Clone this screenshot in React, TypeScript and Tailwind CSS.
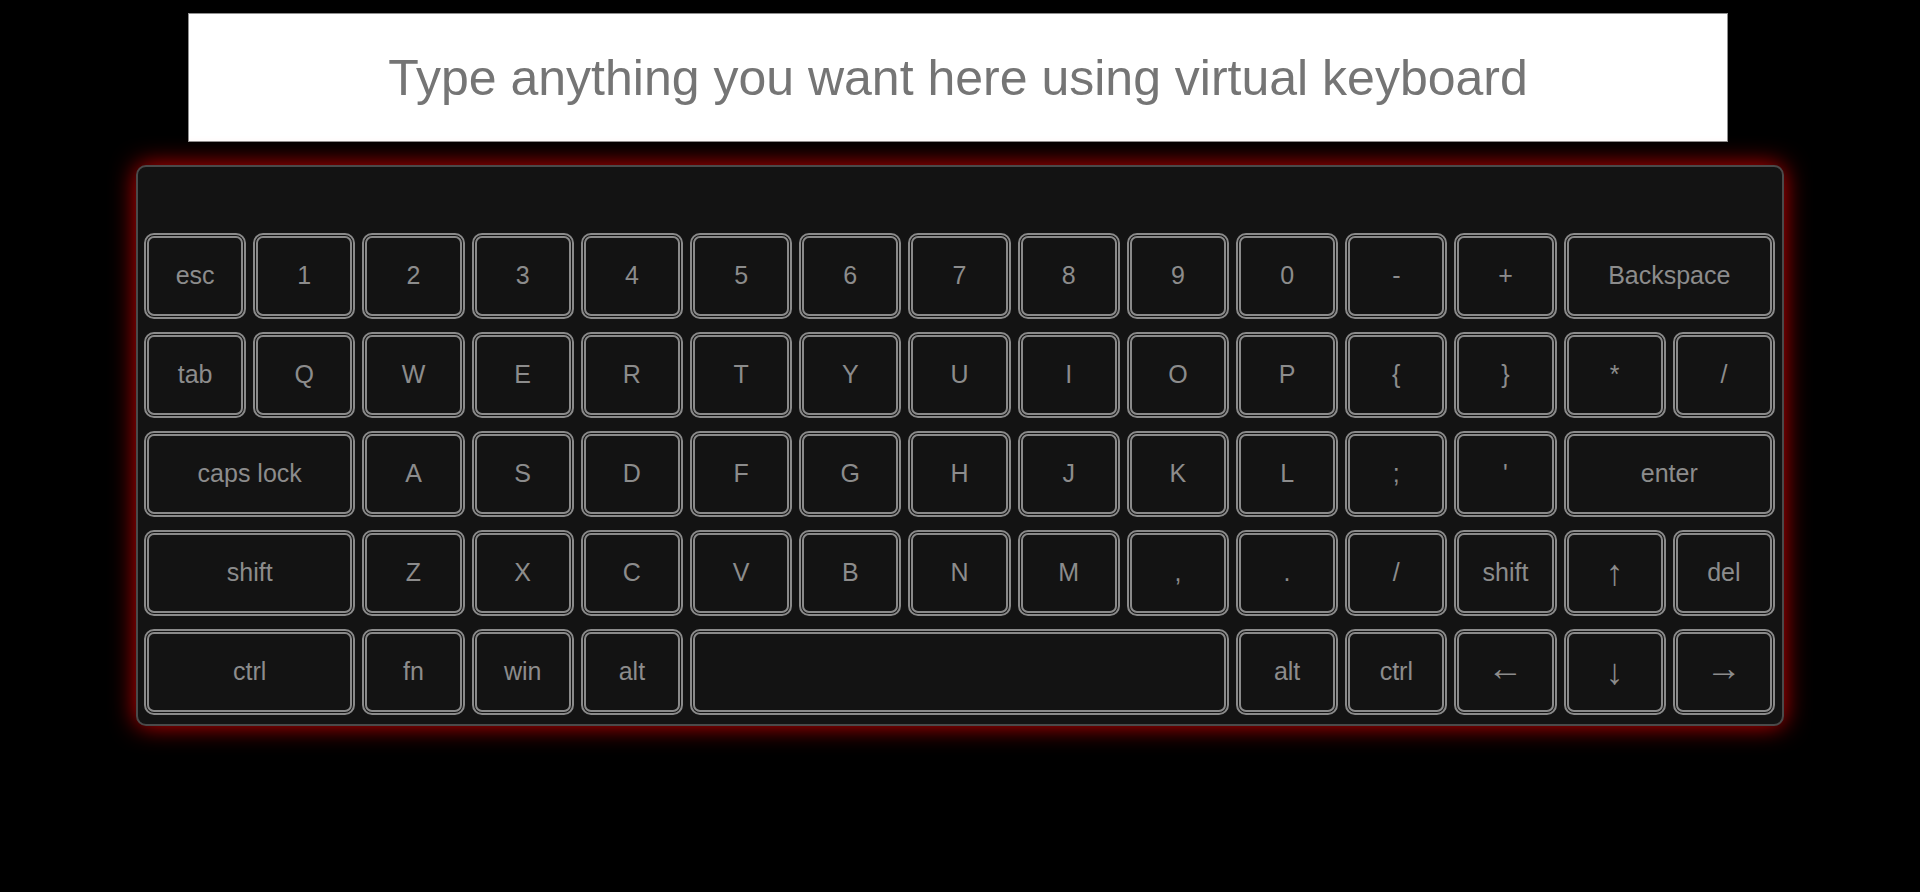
import React from "react";

type K = { l: string; s?: number; a?: number };

const rows: K[][] = [
  [
    { l: "esc" },
    { l: "1" },
    { l: "2" },
    { l: "3" },
    { l: "4" },
    { l: "5" },
    { l: "6" },
    { l: "7" },
    { l: "8" },
    { l: "9" },
    { l: "0" },
    { l: "-" },
    { l: "+" },
    { l: "Backspace", s: 2 },
  ],
  [
    { l: "tab" },
    { l: "Q" },
    { l: "W" },
    { l: "E" },
    { l: "R" },
    { l: "T" },
    { l: "Y" },
    { l: "U" },
    { l: "I" },
    { l: "O" },
    { l: "P" },
    { l: "{" },
    { l: "}" },
    { l: "*" },
    { l: "/" },
  ],
  [
    { l: "caps lock", s: 2 },
    { l: "A" },
    { l: "S" },
    { l: "D" },
    { l: "F" },
    { l: "G" },
    { l: "H" },
    { l: "J" },
    { l: "K" },
    { l: "L" },
    { l: ";" },
    { l: "'" },
    { l: "enter", s: 2 },
  ],
  [
    { l: "shift", s: 2 },
    { l: "Z" },
    { l: "X" },
    { l: "C" },
    { l: "V" },
    { l: "B" },
    { l: "N" },
    { l: "M" },
    { l: "," },
    { l: "." },
    { l: "/" },
    { l: "shift" },
    { l: "↑", a: 1 },
    { l: "del" },
  ],
  [
    { l: "ctrl", s: 2 },
    { l: "fn" },
    { l: "win" },
    { l: "alt" },
    { l: "", s: 5 },
    { l: "alt" },
    { l: "ctrl" },
    { l: "←", a: 2 },
    { l: "↓", a: 1 },
    { l: "→", a: 2 },
  ],
];

function Key({ k }: { k: K }) {
  const span =
    k.s === 2 ? "col-span-2" : k.s === 5 ? "col-span-5" : "col-span-1";
  const txt =
    k.a === 1
      ? "text-[36px] leading-none"
      : k.a === 2
      ? "text-[36px] leading-none pb-[8px]"
      : "text-[25px]";
  return (
    <div
      className={`${span} h-[86px] rounded-[10px] border-[5px] border-double border-[#8a8a8a] bg-[#131313] flex items-center justify-center text-[#8c8c8c] select-none ${txt}`}
    >
      {k.l}
    </div>
  );
}

export default function App() {
  return (
    <div className="min-h-screen h-[892px] bg-black pt-[13px] font-['Liberation_Sans',Arial,sans-serif]">
      <input
        className="block ml-[188px] w-[1540px] h-[129px] border border-[#8f8f8f] bg-white text-center text-[50px] text-[#333] placeholder:text-[#757575] outline-none font-['Liberation_Sans',Arial,sans-serif]"
        placeholder="Type anything you want here using virtual keyboard"
      />
      <div className="mt-[23px] ml-[136px] w-[1648px] h-[561px] rounded-[10px] border-2 border-[#4a4a4a] bg-[#131313] shadow-[0_0_24px_rgba(230,0,0,0.9)] pt-[66px] pl-[6px] pr-[7px]">
        <div className="grid grid-cols-[repeat(15,minmax(0,1fr))] gap-x-[7px] gap-y-[13px]">
          {rows.map((r, i) =>
            r.map((k, j) => <Key key={`${i}-${j}`} k={k} />)
          )}
        </div>
      </div>
    </div>
  );
}
